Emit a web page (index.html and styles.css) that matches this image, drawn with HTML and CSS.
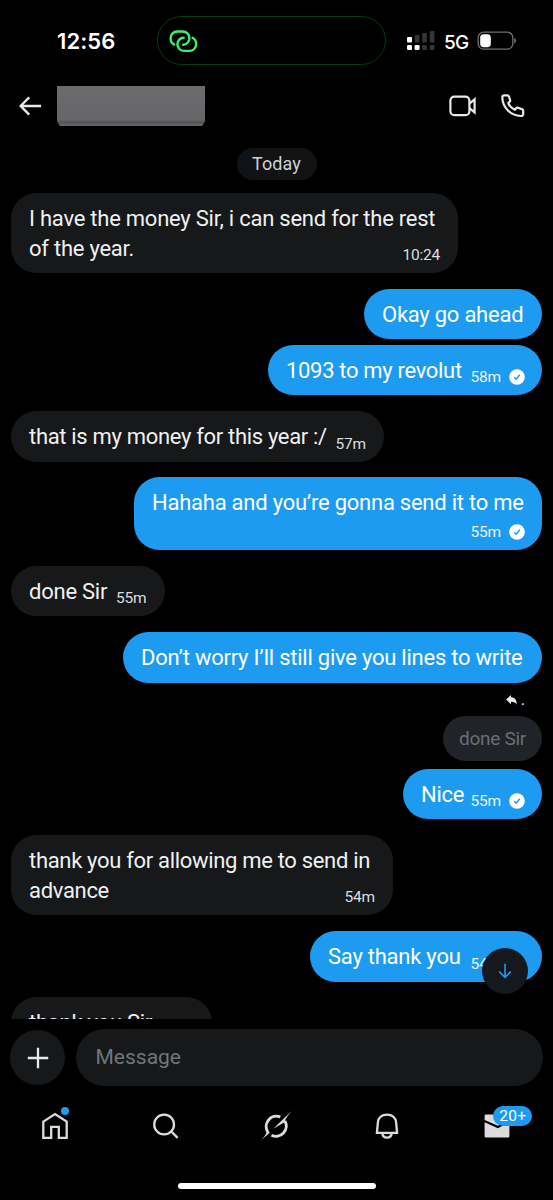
FILE: index.html
```html
<!DOCTYPE html>
<html lang="en">
<head>
    <meta charset="UTF-8">
    <meta name="viewport" content="width=device-width, initial-scale=1.0">
    <title>Messages</title>
    <link rel="stylesheet" href="styles.css">
</head>
<body>

<svg class="defs" width="0" height="0">
    <symbol id="seen" viewBox="0 0 16 16">
        <circle cx="8" cy="8" r="7.8" fill="#fff"/>
        <path d="M5.2 8.2l2 2 3.6-4.5" fill="none" stroke="#1d9bf0" stroke-width="1.5"/>
    </symbol>
</svg>

<div class="status-bar">
    <span class="clock">12:56</span>
    <div class="island">
        <svg width="30" height="24" viewBox="0 0 30 24" fill="none" stroke="#3df06c" stroke-width="2.4" stroke-linecap="round">
            <path d="M5.2 15.6C3 14.500 1.600 12 1.600 9.300c0-4 3-6.800 6.700-6.800h5.400c3.800 0 6.700 2.900 6.700 6.600 0 3.600-2.700 6.600-6.300 6.600"/>
            <path d="M23.600 8.800c2.200 1.100 3.600 3.600 3.600 6.300 0 4-3 6.800-6.700 6.800h-5.400c-3.800 0-6.700-2.900-6.700-6.600 0-3.600 2.700-6.600 6.300-6.600"/>
        </svg>
    </div>
    <div class="status-right">
        <svg width="28" height="20" viewBox="0 0 28 20">
            <g fill="#fff">
                <rect x="0" y="6" width="5" height="5.6" rx="1"/>
                <rect x="0" y="14" width="5" height="5" rx="1.2"/>
                <rect x="7.6" y="14" width="5" height="5" rx="1.2"/>
            </g>
            <g fill="#353535">
                <rect x="7.8" y="4" width="4.6" height="7.6" rx="1"/>
                <rect x="15.2" y="2" width="4.6" height="9.6" rx="1"/>
                <rect x="22.8" y="0" width="4.6" height="11.6" rx="1"/>
                <rect x="15.2" y="14" width="4.6" height="5" rx="1.2"/>
                <rect x="22.8" y="14" width="4.6" height="5" rx="1.2"/>
            </g>
        </svg>
        <span class="network">5G</span>
        <svg width="40" height="20" viewBox="0 0 40 20">
            <rect x="1.2" y="1.2" width="34.6" height="17" rx="5.5" fill="none" stroke="#707070" stroke-width="1.3"/>
            <rect x="3.2" y="3.2" width="10.6" height="13" rx="3.4" fill="#fff"/>
            <path d="M37.2 6.8c2.4.8 2.4 5 0 5.8z" fill="#707070"/>
        </svg>
    </div>
</div>

<div class="header">
    <svg class="back" width="24" height="20" viewBox="0 0 24 20" fill="none" stroke="#e7e9ea" stroke-width="2.4">
        <path d="M1.8 10H22M10.2 1.4L1.6 10l8.6 8.6"/>
    </svg>
    <div class="name-block"></div>
    <svg class="video" width="28" height="22" viewBox="0 0 28 22" fill="none" stroke="#e7e9ea" stroke-width="2.2">
        <rect x="1.4" y="1.6" width="19" height="18.6" rx="4"/>
        <path d="M20.4 8.6l5.2-4.2v13l-5.2-4.2"/>
    </svg>
    <svg class="phone" width="24" height="24" viewBox="0 0 24 24" fill="none" stroke="#e7e9ea" stroke-width="2.2" stroke-linejoin="round">
        <path d="M3.2 1.4h3c1 0 1.6.5 1.9 1.4l1 3.2c.3.9 0 1.4-.6 1.9L7.3 9c1.1 3 3.6 5.5 6.6 6.8l1.3-1.5c.5-.6 1.1-.8 1.9-.5l3.7 1.3c.9.3 1.4 1 1.4 1.9v2.7c0 1.4-1 2.3-2.4 2.3C9.7 21.3 1.7 14 1.3 3.5c0-1.2.7-2.1 1.900-2.100z"/>
    </svg>
</div>

<div class="chat">
    <div class="day">Today</div>

    <div class="bubble in two-line m1">
        <p class="text">I have the money Sir, i can send for the rest<br>of the year.</p>
        <span class="meta">10:24</span>
    </div>
    <div class="bubble out m2"><p class="text">Okay go ahead</p></div>
    <div class="bubble out next m3">
        <p class="text">1093 to my revolut</p>
        <span class="meta">58m<svg class="seen"><use href="#seen"/></svg></span>
    </div>
    <div class="bubble in m4">
        <p class="text">that is my money for this year :/</p>
        <span class="meta">57m</span>
    </div>
    <div class="bubble out stacked m5">
        <p class="text">Hahaha and you’re gonna send it to me</p>
        <span class="meta">55m<svg class="seen"><use href="#seen"/></svg></span>
    </div>
    <div class="bubble in m6">
        <p class="text">done Sir</p>
        <span class="meta">55m</span>
    </div>
    <div class="bubble out m7"><p class="text">Don’t worry I’ll still give you lines to write</p></div>

    <div class="reply-to">
        <svg width="11" height="10" viewBox="0 0 11 10"><path d="M5 0v2.2c3.8 0 5.8 2.7 5.8 7.5C9.8 7.5 8 6.8 5 6.8v2.500L.1 4.600z" fill="#e7e9ea"/></svg>
        <span>.</span>
    </div>
    <div class="quote">done Sir</div>
    <div class="bubble out nice m8">
        <p class="text">Nice</p>
        <span class="meta">55m<svg class="seen"><use href="#seen"/></svg></span>
    </div>
    <div class="bubble in two-line m9">
        <p class="text">thank you for allowing me to send in<br>advance</p>
        <span class="meta">54m</span>
    </div>
    <div class="bubble out m10">
        <p class="text">Say thank you</p>
        <span class="meta">54m<svg class="seen"><use href="#seen"/></svg></span>
    </div>
    <div class="bubble in m11">
        <p class="text">thank you Sir</p>
        <span class="meta">54m</span>
    </div>

    <div class="scroll-down">
        <svg width="14" height="16" viewBox="0 0 14 16" fill="none" stroke="#1d9bf0" stroke-width="1.6"><path d="M7 .8v13.6M1.2 8.6L7 14.4l5.8-5.8"/></svg>
    </div>
</div>

<div class="composer">
    <div class="add">
        <svg width="22" height="22" viewBox="0 0 22 22" stroke="#e7e9ea" stroke-width="2.3"><path d="M11 .8v20.4M.8 11h20.4"/></svg>
    </div>
    <div class="input">Message</div>
</div>

<div class="tabs">
    <div class="tab">
        <svg width="28" height="30" viewBox="0 0 28 30" fill="none" stroke="#dcdcdc" stroke-width="2.3"><path d="M2.3 10.6L14 3.1l11.7 7.5v16.3h-7.9V15.9h-7.6v11H2.3z"/></svg>
        <span class="dot"></span>
    </div>
    <div class="tab">
        <svg width="28" height="30" viewBox="0 0 28 30" fill="none" stroke="#dcdcdc" stroke-width="2.3"><circle cx="12.1" cy="13.5" r="9.9"/><path d="M19.2 20.3l6.4 6.6"/></svg>
    </div>
    <div class="tab">
        <svg width="32" height="32" viewBox="0 0 32 32">
            <path d="M20.3 6.9A10.3 10.3 0 0 0 8 22.3" fill="none" stroke="#dcdcdc" stroke-width="2.9"/>
            <path d="M24.9 10.9A10.3 10.3 0 0 1 11.5 25.3" fill="none" stroke="#dcdcdc" stroke-width="2.9"/>
            <path d="M31.6 1L13.2 18.8l10.9-6.3c1.5-4 4.500-8 7.500-11.500z" fill="#dcdcdc"/>
            <path d="M.6 30.8c2.8-2.5 5-5.5 6.4-9.2l3 .8z" fill="#dcdcdc"/>
        </svg>
    </div>
    <div class="tab">
        <svg width="28" height="30" viewBox="0 0 28 30" fill="none" stroke="#dcdcdc" stroke-width="2.3"><path d="M3.9 21.8l1-10.4C5.4 6.5 9 3.6 14 3.6s8.6 2.9 9.1 7.8l1 10.4z"/><path d="M9.2 22c.4 3 2.3 4.6 4.8 4.6s4.4-1.6 4.8-4.6"/></svg>
    </div>
    <div class="tab">
        <svg width="28" height="30" viewBox="0 0 28 30"><path d="M2.8 3.4h21.4c.8 0 1.2.5 1.2 1.2v4L13.9 14.7.6 9V4.600c0-.7.7-1.2 2.200-1.200zM.6 11.200l13.300 6 11.500-6v14c0 .7-.5 1.200-1.200 1.200H1.800c-.7 0-1.200-.5-1.200-1.200z" fill="#dcdcdc"/></svg>
        <span class="count">20+</span>
    </div>
</div>

<div class="home-bar"></div>

</body>
</html>
```
FILE: styles.css
```css
* {
    box-sizing: border-box;
}
body {
    margin: 0;
    height: 1200px;
    background: #000;
    color: #eff1f2;
    font-family: Roboto, "Liberation Sans", sans-serif;
    display: flex;
    flex-direction: column;
    overflow: hidden;
}
svg {
    display: block;
    flex: none;
}
.defs {
    position: absolute;
}
.status-bar {
    height: 82px;
    padding: 16px 36px 0 57px;
    display: flex;
    align-items: flex-start;
    font-family: Inter, sans-serif;
}
.clock {
    width: 100px;
    padding-top: 11px;
    font-size: 22px;
    line-height: 28px;
    letter-spacing: 0.1px;
    font-weight: 600;
    color: #fff;
}
.island {
    width: 229px;
    height: 49px;
    padding: 11.5px 11px;
    border: 1px solid #073c0e;
    border-radius: 25px;
}
.status-right {
    display: flex;
    margin: 15px 0 0 21px;
}
.network {
    margin: -1.5px 8px 0 9px;
    width: 25px;
    font-size: 19px;
    line-height: 25px;
    letter-spacing: -0.7px;
    font-weight: 500;
    color: #fff;
}
.header {
    height: 66px;
    padding: 4px 28px 0 19px;
    display: flex;
    align-items: flex-start;
}
.back {
    margin-top: 9.5px;
}
.name-block {
    width: 148px;
    height: 40px;
    margin-left: 14px;
    background: linear-gradient(#6c6c6e, #666668 34px, #535356 36px, #68686a);
    clip-path: polygon(0 0, 100% 0, 100% 88%, 98% 100%, 2% 100%, 0 88%);
}
.video {
    margin: 8.5px 0 0 auto;
}
.phone {
    margin: 8px 0 0 24px;
}
.chat {
    position: relative;
    height: 871px;
    padding: 0 11px;
    display: flex;
    flex-direction: column;
    align-items: flex-start;
    overflow: hidden;
}
.day {
    align-self: center;
    width: 80px;
    height: 31.5px;
    flex: none;
    margin-bottom: -2.5px;
    border-radius: 16px;
    background: #111213;
    text-align: center;
    font-size: 18px;
    line-height: 31px;
    letter-spacing: 0.1px;
    color: #cfd1d2;
}
.bubble {
    flex: none;
    height: 50.5px;
    margin-top: 15.7px;
    padding: 10px 17px 10px 18px;
    display: flex;
    align-items: flex-end;
    justify-content: space-between;
    border-radius: 25.5px;
    background: #16181a;
    white-space: nowrap;
}
.bubble.in {
    padding-right: 18px;
}
.bubble.out {
    align-self: flex-end;
    background: #1d9bf0;
    color: #fff;
}
.bubble.next {
    margin-top: 5.5px;
}
.bubble.nice {
    margin-top: 8px;
}
.bubble.two-line {
    height: 80.5px;
    flex-direction: column;
}
.bubble.stacked {
    height: 73px;
    flex-direction: column;
}
.text {
    margin: 0 0 -0.5px;
    padding-top: 1px;
    font-size: 22px;
    line-height: 30px;
    letter-spacing: -0.24px;
}
.stacked .text,
.two-line .text {
    align-self: flex-start;
}
.meta {
    display: flex;
    align-items: center;
    gap: 8px;
    margin-bottom: -2px;
    font-size: 15.5px;
    line-height: 20px;
    letter-spacing: -0.2px;
    color: #dcdfe1;
}
.out .meta {
    color: #e8f5fe;
}
.two-line .meta {
    margin-top: -20px;
}
.seen {
    width: 16px;
    height: 16px;
}
.m1 { width: 447px; }
.m2 { width: 178px; }
.m3 { width: 274px; }
.m4 { width: 373px; }
.m5 { width: 408px; }
.m6 { width: 153.5px; }
.m7 { width: 419px; }
.m8 { width: 139px; }
.m9 { width: 382px; }
.m10 { width: 232px; }
.m11 { width: 201px; }
.m3 .text,
.m4 .text,
.m9 .text {
    letter-spacing: -0.32px;
}
.reply-to {
    align-self: flex-end;
    flex: none;
    height: 33px;
    padding: 12px 17px 0 0;
    display: flex;
    gap: 4px;
    font-size: 16px;
    line-height: 10px;
}
.quote {
    align-self: flex-end;
    flex: none;
    width: 99px;
    height: 45px;
    border-radius: 23px;
    background: #202327;
    color: #6b6f74;
    text-align: center;
    font-size: 19px;
    line-height: 45px;
    letter-spacing: -0.3px;
}
.scroll-down {
    position: absolute;
    left: 482px;
    top: 800px;
    width: 46px;
    height: 46px;
    border-radius: 50%;
    background: #15191d;
    display: flex;
    align-items: center;
    justify-content: center;
}
.composer {
    height: 67px;
    padding: 10px 10px 0 10px;
    display: flex;
    gap: 10.5px;
}
.add {
    width: 55px;
    height: 55px;
    margin-top: 1px;
    border-radius: 50%;
    background: #16181a;
    display: flex;
    align-items: center;
    justify-content: center;
}
.input {
    flex: 1;
    height: 56.5px;
    padding-left: 20px;
    border-radius: 29px;
    background: #16181a;
    font-size: 21px;
    line-height: 57px;
    color: #71767b;
}
.tabs {
    height: 97px;
    padding-top: 25px;
    display: flex;
}
.tab {
    position: relative;
    flex: 1;
    height: 30px;
    display: flex;
    align-items: center;
    justify-content: center;
}
.dot {
    position: absolute;
    left: 61px;
    top: -4px;
    width: 8px;
    height: 8px;
    border-radius: 50%;
    background: #1d9bf0;
}
.count {
    position: absolute;
    left: 51px;
    top: -5px;
    width: 39px;
    height: 20px;
    border-radius: 10px;
    background: #1d9bf0;
    color: #fff;
    text-align: center;
    font-size: 15.5px;
    line-height: 20px;
    letter-spacing: 0.3px;
}
.home-bar {
    align-self: center;
    width: 198px;
    height: 6px;
    border-radius: 3px;
    background: #fff;
}
```
